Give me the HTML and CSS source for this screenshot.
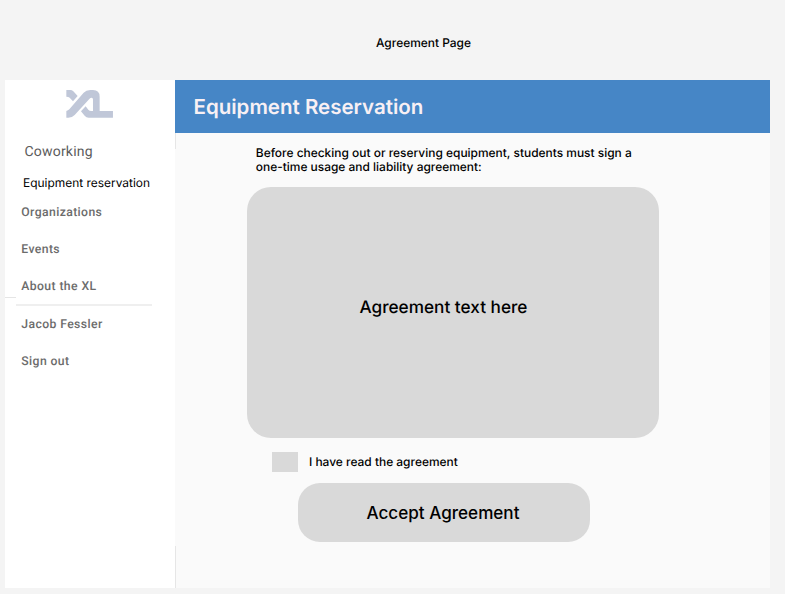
FILE: index.html
```html
<!DOCTYPE html>
<html lang="en">
<head>
<meta charset="utf-8">
<title>Agreement Page</title>
<link rel="stylesheet" href="styles.css">
</head>
<body>
<h1 class="page-title"><span>Agreement Page</span></h1>
<div class="frame">
  <nav class="sidebar">
    <svg class="logo" viewBox="48 42 142 84" aria-label="XL">
      <path d="M49 42H61Q66 42 70 46L83 60L69 76L59 65Q56 62 49 62Z"/>
      <path d="M49 125V105Q54 104 58 100L101 50Q108 42 121 42H129Q149 42 149 62V105H189V125H116Q109 125 104 119L93 106L107 91L115 101Q118 105 124 105H129V70Q129 65 125 65Q121 65 118 69L74 117Q67 125 55 125Z"/>
    </svg>
    <a class="item coworking">Coworking</a>
    <a class="item current">Equipment reservation</a>
    <a class="item">Organizations</a>
    <a class="item">Events</a>
    <a class="item">About the XL</a>
    <div class="divider"><i class="stub"></i><i class="rule"></i></div>
    <a class="item">Jacob Fessler</a>
    <a class="item">Sign out</a>
  </nav>
  <main class="main">
    <header class="bar"><span>Equipment Reservation</span></header>
    <p class="intro">Before checking out or reserving equipment, students must sign a<br>one-time usage and liability agreement:</p>
    <section class="agreement"><span>Agreement text here</span></section>
    <label class="confirm"><span class="box"></span><span class="confirm-text">I have read the agreement</span></label>
    <button class="accept"><span>Accept Agreement</span></button>
  </main>
</div>
</body>
</html>
```
FILE: styles.css
```css
* { box-sizing: border-box; }
body {
  margin: 0;
  height: 594px;
  overflow: hidden;
  background: #f4f4f4;
  color: #000;
  font-family: Inter, sans-serif;
  text-rendering: geometricPrecision;
}
.page-title {
  margin: 0;
  height: 80px;
  padding: 35px 0 0 376px;
  font-size: 11.95px;
  line-height: 15px;
  font-weight: 500;
}
.frame {
  display: flex;
  width: 765px;
  height: 508px;
  margin-left: 5px;
  background: #fafafa;
}
.sidebar {
  display: flex;
  flex-direction: column;
  width: 170px;
  background: #fff;
}
.logo {
  width: 47.3px;
  height: 28px;
  margin: 10px 0 24px 61px;
  fill: #c0c7d8;
}
.item {
  height: 37px;
  padding-left: 16.3px;
  font: 500 12.2px/21px Roboto, sans-serif;
  letter-spacing: 0.4px;
  color: #6c6c6c;
  white-space: nowrap;
}
.item.coworking {
  height: 31px;
  padding-left: 19.5px;
  font-size: 14px;
  line-height: 20px;
  font-weight: 400;
  letter-spacing: 0.2px;
  color: #5c5c5c;
}
.item.current {
  height: 29px;
  padding-left: 18px;
  font: 400 11.95px/20px Inter, sans-serif;
  letter-spacing: 0;
  color: #000;
}
.divider {
  display: flex;
  height: 10px;
  margin: -17px 0 8px;
}
.stub { width: 11px; height: 1px; margin-top: 1px; background: #e5e5e5; }
.rule { width: 136px; height: 2px; margin-top: 8px; background: #efefef; }
.main {
  display: flex;
  flex-direction: column;
  width: 595px;
  background:
    linear-gradient(#e6e6e6, #e6e6e6) 0 53px / 1px 16px no-repeat,
    linear-gradient(#e6e6e6, #e6e6e6) 0 466px / 1px 43px no-repeat;
}
.bar {
  height: 53px;
  padding-left: 18.5px;
  background: #4686c6;
  color: #f8f0f4;
  font-size: 20.5px;
  line-height: 53px;
  font-weight: 600;
}
.intro {
  margin: 13px 0 13px 80.8px;
  font-size: 11.95px;
  line-height: 14px;
  font-weight: 500;
  white-space: nowrap;
}
.agreement {
  width: 412px;
  height: 251px;
  margin-left: 71.5px;
  padding: 109px 0 0 113px;
  border-radius: 24px;
  background: #d9d9d9;
  font-size: 17.2px;
  line-height: 24px;
  font-weight: 500;
}
.confirm {
  display: flex;
  align-items: center;
  gap: 11px;
  height: 20px;
  margin: 14px 0 11px 97px;
  font-size: 11.95px;
  font-weight: 500;
}
.confirm-text { height: 16px; line-height: 15px; }
.box { width: 26px; height: 20px; background: #d9d9d9; }
.accept {
  width: 292px;
  height: 59px;
  margin-left: 122.5px;
  padding: 0 0 0 69px;
  border: 0;
  border-radius: 22px;
  background: #d9d9d9;
  color: #000;
  font: 500 17.1px/24px Inter, sans-serif;
  text-align: left;
}
```
